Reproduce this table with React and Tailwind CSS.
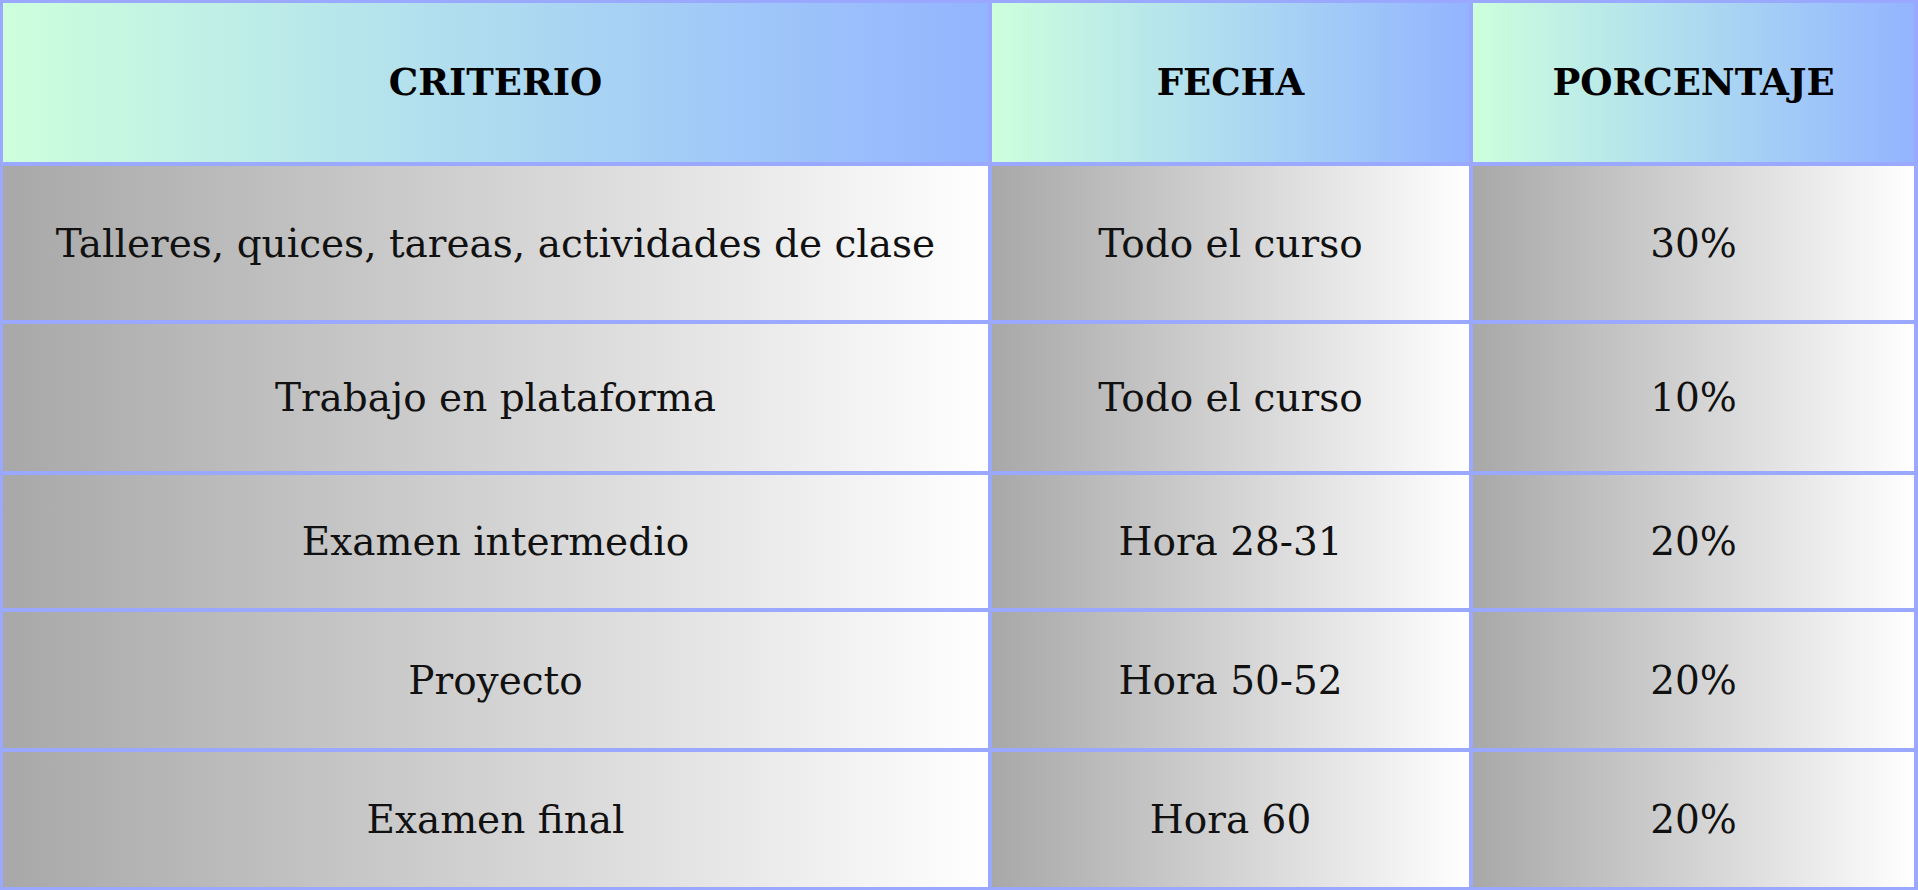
import React from "react";

const rows = [
  ["Talleres, quices, tareas, actividades de clase", "Todo el curso", "30%"],
  ["Trabajo en plataforma", "Todo el curso", "10%"],
  ["Examen intermedio", "Hora 28-31", "20%"],
  ["Proyecto", "Hora 50-52", "20%"],
  ["Examen final", "Hora 60", "20%"],
];

const headerCls =
  "flex items-center justify-center bg-gradient-to-r from-[#cdffdc] to-[#93b4ff] text-black font-bold text-[37px]";
const bodyCls =
  "flex items-center justify-center pt-[2px] bg-gradient-to-r from-[#a8a8a8] to-[#ffffff] text-[#111] text-[39px]";

export default function App() {
  return (
    <div className="w-[1918px] h-[890px] bg-[#9aa8ff] pt-[3px] pl-[3px] pr-[4px] pb-[4px]">
      <div className="grid grid-cols-[985px_477px_441px] grid-rows-[159px_154px_147px_133px_136px_135px] gap-[4px] h-full">
        {["CRITERIO", "FECHA", "PORCENTAJE"].map((h) => (
          <div key={h} className={headerCls} style={{ fontFamily: '"DejaVu Serif", serif' }}>
            {h}
          </div>
        ))}
        {rows.map((r, i) =>
          r.map((c, j) => (
            <div key={i + "-" + j} className={bodyCls} style={{ fontFamily: '"DejaVu Serif", serif' }}>
              {c}
            </div>
          ))
        )}
      </div>
    </div>
  );
}
